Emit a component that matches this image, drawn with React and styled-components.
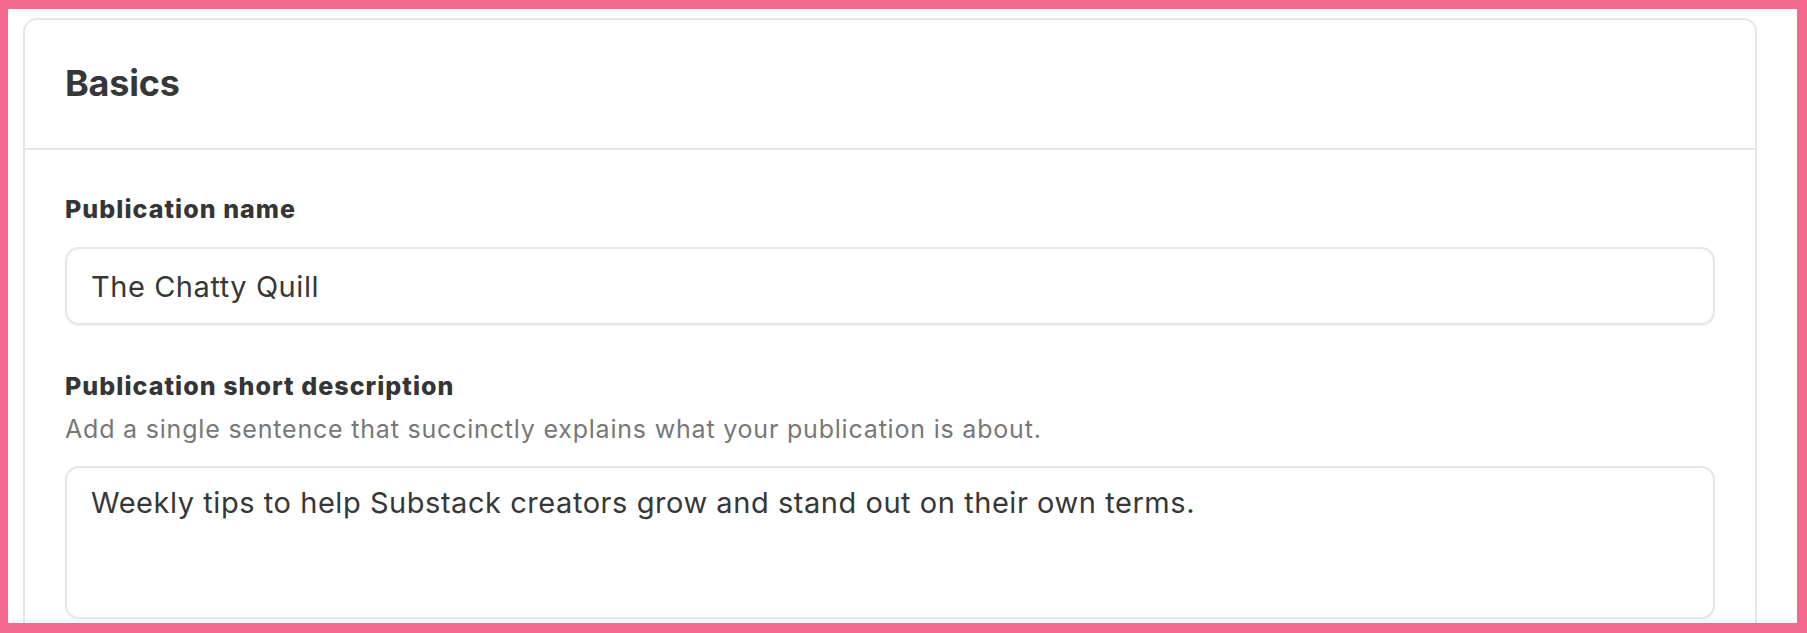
import React from "react";
import styled, { createGlobalStyle } from "styled-components";

const Global = createGlobalStyle`
  html, body { margin: 0; padding: 0; background: #ffffff; }
  body { font-family: Inter, "Noto Sans", "Liberation Sans", sans-serif; color: #363737; }
  * { box-sizing: border-box; }
`;

const Frame = styled.div`
  height: 633px;
  overflow: hidden;
  border-style: solid;
  border-color: #f3698e;
  border-width: 9px 10px 10px 8px;
  padding: 9px 40px 0 15px;
  background: #ffffff;
`;

const Card = styled.section`
  border: 2px solid #e6e6e6;
  border-radius: 14px;
  background: #ffffff;
  min-height: 700px;
`;

const CardHeader = styled.header`
  padding: 41px 40px 43px;
  border-bottom: 2px solid #e6e6e6;
`;

const Title = styled.h2`
  margin: 0;
  font-size: 36px;
  line-height: 44px;
  font-weight: 700;
  color: #363737;
  letter-spacing: -0.2px;
`;

const CardBody = styled.div`
  padding: 44px 40px 0;
  display: flex;
  flex-direction: column;
`;

const Field = styled.div`
  display: flex;
  flex-direction: column;
  margin-bottom: ${(p) => p.$gap || 0}px;
`;

const Label = styled.label`
  font-size: 25px;
  line-height: 30px;
  font-weight: 800;
  letter-spacing: 1.05px;
  color: #343535;
  margin-bottom: ${(p) => p.$mb}px;
`;

const Hint = styled.p`
  margin: 0 0 22px;
  font-size: 25px;
  line-height: 30px;
  letter-spacing: 0.8px;
  color: #777777;
`;

const TextInput = styled.input`
  height: 78px;
  width: 100%;
  border: 2px solid #e6e6e6;
  border-radius: 14px;
  padding: 0 24px;
  font-family: Inter, "Noto Sans", "Liberation Sans", sans-serif;
  font-size: 29px;
  letter-spacing: 0.55px;
  color: #363737;
  background: #ffffff;
  box-shadow: 0 1px 2px rgba(0, 0, 0, 0.06);
  outline: none;
`;

const TextArea = styled.textarea`
  height: 153px;
  width: 100%;
  border: 2px solid #e6e6e6;
  border-radius: 14px;
  padding: 14px 24px;
  font-family: Inter, "Noto Sans", "Liberation Sans", sans-serif;
  font-size: 29px;
  line-height: 42px;
  letter-spacing: 0.55px;
  color: #363737;
  background: #ffffff;
  box-shadow: 0 1px 2px rgba(0, 0, 0, 0.06);
  resize: none;
  outline: none;
`;

export default function App() {
  return (
    <>
      <Global />
      <Frame>
        <Card>
          <CardHeader>
            <Title>Basics</Title>
          </CardHeader>
          <CardBody>
            <Field $gap={46}>
              <Label $mb={23}>Publication name</Label>
              <TextInput readOnly value="The Chatty Quill" />
            </Field>
            <Field>
              <Label $mb={13}>Publication short description</Label>
              <Hint>Add a single sentence that succinctly explains what your publication is about.</Hint>
              <TextArea
                readOnly
                value="Weekly tips to help Substack creators grow and stand out on their own terms."
              />
            </Field>
          </CardBody>
        </Card>
      </Frame>
    </>
  );
}
